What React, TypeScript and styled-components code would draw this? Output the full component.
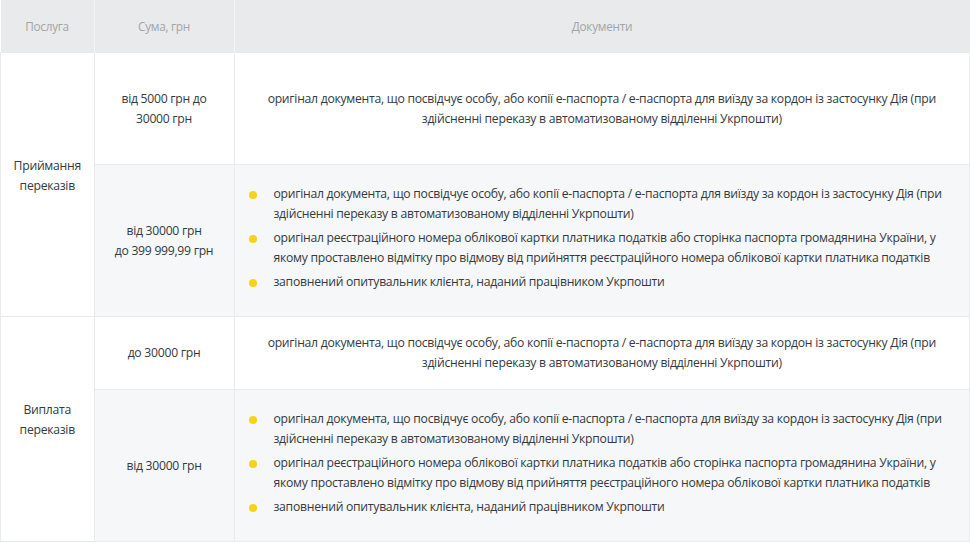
import React from "react";
import styled, { createGlobalStyle } from "styled-components";

const GlobalStyle = createGlobalStyle`
  body {
    margin: 0;
    padding: 0;
    background: #ffffff;
    font-family: "Open Sans", "Noto Sans", sans-serif;
    color: #333a40;
  }
`;

const Table = styled.table`
  width: 970px;
  border-collapse: collapse;
  table-layout: fixed;
  font-size: 12.2px;
  letter-spacing: -0.27px;
  line-height: 20px;
`;

const HeadCell = styled.th<{ $w?: number }>`
  width: ${(p) => (p.$w ? `${p.$w}px` : "auto")};
  height: 52px;
  padding: 0;
  background: #e8eaec;
  color: #a2a5a8;
  font-weight: 400;
  font-size: 11.8px;
  text-align: center;
  border-right: 1px solid #f3f4f5;
  &:last-child {
    border-right: none;
  }
`;

const Row = styled.tr<{ $shade?: boolean; $h?: number }>`
  background: ${(p) => (p.$shade ? "#f6f7f8" : "#ffffff")};
  height: ${(p) => (p.$h ? `${p.$h}px` : "auto")};
`;

const Cell = styled.td`
  border: 1px solid #e9eaeb;
  padding: 0 16px;
  text-align: center;
  vertical-align: middle;
`;

const ServiceCell = styled(Cell)`
  background: #ffffff;
  padding: 0 8px 18px;
`;

const DocCell = styled(Cell)`
  padding: 0 28px;
`;

const List = styled.ul`
  list-style: none;
  margin: 0 -14px 0 0;
  padding: 19px 0 24px;
  text-align: left;
  display: flex;
  flex-direction: column;
  gap: 4px;
`;

const Item = styled.li`
  position: relative;
  padding-left: 25px;
  margin-left: -14px;
  &::before {
    content: "";
    position: absolute;
    left: 0;
    top: 7px;
    width: 8px;
    height: 8px;
    border-radius: 50%;
    background: #f6d31a;
  }
`;

const passport =
  "оригінал документа, що посвідчує особу, або копії е-паспорта / е-паспорта для виїзду за кордон із застосунку Дія (при здійсненні переказу в автоматизованому відділенні Укрпошти)";

const fullDocs = [
  passport,
  "оригінал реєстраційного номера облікової картки платника податків або сторінка паспорта громадянина України, у якому проставлено відмітку про відмову від прийняття реєстраційного номера облікової картки платника податків",
  "заповнений опитувальник клієнта, наданий працівником Укрпошти",
];

const DocList: React.FC = () => (
  <List>
    {fullDocs.map((d) => (
      <Item key={d}>{d}</Item>
    ))}
  </List>
);

const App: React.FC = () => (
  <>
    <GlobalStyle />
    <Table>
      <thead>
        <tr>
          <HeadCell $w={93}>Послуга</HeadCell>
          <HeadCell $w={139}>Сума, грн</HeadCell>
          <HeadCell>Документи</HeadCell>
        </tr>
      </thead>
      <tbody>
        <Row $h={112}>
          <ServiceCell rowSpan={2}>Приймання переказів</ServiceCell>
          <Cell>від 5000 грн до 30000 грн</Cell>
          <DocCell>{passport}</DocCell>
        </Row>
        <Row $shade>
          <Cell>
            від 30000 грн
            <br />
            до 399 999,99 грн
          </Cell>
          <DocCell>
            <DocList />
          </DocCell>
        </Row>
        <Row $h={73}>
          <ServiceCell rowSpan={2}>Виплата переказів</ServiceCell>
          <Cell>до 30000 грн</Cell>
          <DocCell>{passport}</DocCell>
        </Row>
        <Row $shade>
          <Cell>від 30000 грн</Cell>
          <DocCell>
            <DocList />
          </DocCell>
        </Row>
      </tbody>
    </Table>
  </>
);

export default App;
